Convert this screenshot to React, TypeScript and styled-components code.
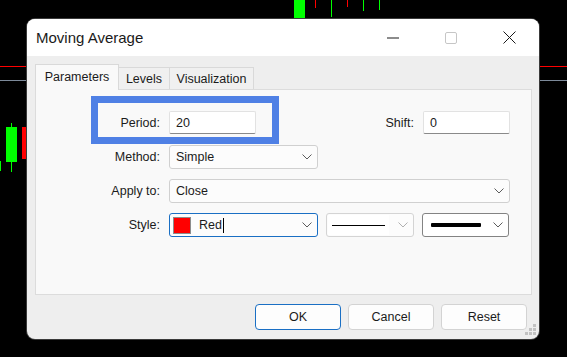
import React from 'react';
import styled, { createGlobalStyle } from 'styled-components';

const GlobalStyle = createGlobalStyle`
	html, body {
		margin: 0;
		padding: 0;
		background: #000;
	}
	body {
		font-family: 'Liberation Sans', Arial, sans-serif;
		color: #1b1b1b;
	}
`;

const Stage = styled.div`
	position: relative;
	width: 567px;
	height: 357px;
	overflow: hidden;
	background: #000;
	padding: 19px 0 0 27px;
	box-sizing: border-box;
`;

const Chart = styled.svg`
	position: absolute;
	left: 0;
	top: 0;
`;

const Window = styled.div`
	position: relative;
	width: 512px;
	height: 320px;
	border-radius: 8px;
	background: #eeeeee;
	overflow: hidden;
	display: flex;
	flex-direction: column;
	box-shadow: 0 0 0 1px #3a3a3a;
`;

const TitleBar = styled.div`
	height: 37px;
	flex-shrink: 0;
	display: flex;
	align-items: center;
	padding: 0 1px 0 9px;
	background: #ffffff;

	> .title {
		font-size: 15px;
		color: #1a1a1a;
	}
`;

const Controls = styled.div`
	margin-left: auto;
	display: flex;
	height: 100%;
`;

const ControlButton = styled.div`
	width: 58px;
	height: 100%;
	display: flex;
	align-items: center;
	justify-content: center;
`;

const Body = styled.div`
	flex: 1;
	display: flex;
	flex-direction: column;
	padding: 8px 7px 0 8px;
	font-size: 12.5px;
`;

const TabStrip = styled.div`
	display: flex;
	align-items: flex-end;
	height: 25px;
	position: relative;
	z-index: 1;
`;

const Tab = styled.div<{ $active?: boolean; $width: number }>`
	width: ${(p) => p.$width}px;
	box-sizing: border-box;
	display: flex;
	align-items: center;
	justify-content: center;
	border: 1px solid #d9d9d9;
	border-bottom: none;
	border-left-width: ${(p) => (p.$active ? 1 : 0)}px;
	height: ${(p) => (p.$active ? 26 : 22)}px;
	margin-bottom: ${(p) => (p.$active ? -1 : 0)}px;
	background: ${(p) => (p.$active ? '#f9f9f9' : '#f0f0f0')};
	padding-bottom: ${(p) => (p.$active ? 1 : 0)}px;
`;

const Panel = styled.div`
	height: 206px;
	box-sizing: border-box;
	border: 1px solid #dcdcdc;
	background: #f9f9f9;
	padding-top: 6px;
	display: flex;
	flex-direction: column;
`;

const TopRow = styled.div`
	display: flex;
	align-items: flex-start;
`;

const Highlight = styled.div`
	margin-left: 55px;
	border: 7px solid #4f80e5;
	padding: 8px 16px 3px 0;
	display: flex;
	align-items: center;
	gap: 9px;
`;

const ShiftGroup = styled.div`
	margin-left: auto;
	margin-right: 21px;
	margin-top: 15px;
	display: flex;
	align-items: center;
	gap: 9px;
`;

const Label = styled.div<{ $width?: number }>`
	width: ${(p) => (p.$width ? `${p.$width}px` : 'auto')};
	text-align: right;
	flex-shrink: 0;
`;

const TextBox = styled.div`
	width: 87px;
	height: 23px;
	box-sizing: border-box;
	background: #ffffff;
	border: 1px solid #e2e2e2;
	border-bottom-color: #8a8a8a;
	border-radius: 2px;
	padding-left: 6px;
	display: flex;
	align-items: center;
`;

const Row = styled.div<{ $gap: number }>`
	display: flex;
	align-items: center;
	gap: 9px;
	margin-top: ${(p) => p.$gap}px;
`;

const StyleRow = styled(Row)`
	> .rest {
		display: flex;
		gap: 8px;
	}
`;

const Select = styled.div<{ $width: number; $tone?: 'focus' | 'dim' | 'dark' }>`
	width: ${(p) => p.$width}px;
	height: 24px;
	box-sizing: border-box;
	display: flex;
	align-items: center;
	padding: 0 5px 0 6px;
	border-radius: 3px;
	background: ${(p) => (p.$tone === 'dark' ? '#ffffff' : '#fcfcfc')};
	border: 1px solid
		${(p) =>
			p.$tone === 'focus' ? '#1a6fc4' : p.$tone === 'dark' ? '#838383' : p.$tone === 'dim' ? '#d4d4d4' : '#d0d0d0'};

	> svg {
		margin-left: auto;
		flex-shrink: 0;
	}
`;

const ColorSwatch = styled.span`
	width: 18px;
	height: 17px;
	box-sizing: border-box;
	background: #ff0000;
	border: 1px solid #8c8c8c;
	margin-left: -3px;
	margin-right: 8px;
`;

const Caret = styled.span`
	display: inline-block;
	width: 1px;
	height: 15px;
	background: #000;
	margin-left: 1px;
`;

const LineBox = styled.div`
	width: 61px;
	height: 20px;
	margin-left: -5px;
	background: #ffffff;
	display: flex;
	align-items: center;
	justify-content: center;
`;

const LineMark = styled.div<{ $width: number; $thick: number; $offset?: number }>`
	width: ${(p) => p.$width}px;
	height: ${(p) => p.$thick}px;
	margin-left: ${(p) => p.$offset ?? 0}px;
	background: #000;
	border-radius: ${(p) => (p.$thick > 2 ? 1 : 0)}px;
`;

const Footer = styled.div`
	display: flex;
	justify-content: flex-end;
	gap: 7px;
	margin-top: 9px;
	padding-right: 5px;
`;

const Button = styled.div<{ $primary?: boolean }>`
	width: 86px;
	height: 26px;
	box-sizing: border-box;
	display: flex;
	align-items: center;
	justify-content: center;
	border-radius: 4px;
	background: #fdfdfd;
	border: 1px solid ${(p) => (p.$primary ? '#1a6fc4' : '#d3d3d3')};
`;

const Grip = styled.svg`
	position: absolute;
	right: 2px;
	bottom: 3px;
`;

const Chevron: React.FC<{ color?: string }> = ({ color = '#5c5c5c' }) => (
	<svg width="10" height="6" viewBox="0 0 10 6">
		<path d="M0.5 0.5 L5 5 L9.5 0.5" fill="none" stroke={color} strokeWidth="1" />
	</svg>
);

export default function App() {
	return (
		<Stage>
			<GlobalStyle />
			<Chart width="567" height="357" viewBox="0 0 567 357">
				<rect x="0" y="66" width="567" height="1" fill="#ff0000" />
				<rect x="0" y="80" width="567" height="1" fill="#7d8a9a" />
				<rect x="294" y="0" width="11" height="18" fill="#00ff00" />
				<rect x="315" y="0" width="1" height="8" fill="#ff0000" />
				<rect x="331" y="0" width="1" height="17" fill="#00ff00" />
				<rect x="347" y="0" width="1" height="7" fill="#ff0000" />
				<rect x="363" y="0" width="1" height="11" fill="#00ff00" />
				<rect x="379" y="0" width="1" height="10" fill="#00ff00" />
				<rect x="11" y="123" width="1" height="49" fill="#00ff00" />
				<rect x="6" y="127" width="11" height="35" fill="#00ff00" />
				<rect x="22" y="127" width="6" height="32" fill="#ff0000" />
				<rect x="0" y="161" width="1" height="10" fill="#00ff00" />
			</Chart>
			<Window>
				<TitleBar>
					<span className="title">Moving Average</span>
					<Controls>
						<ControlButton>
							<svg width="12" height="12" viewBox="0 0 12 12">
								<rect x="0" y="5.5" width="12" height="1" fill="#1a1a1a" />
							</svg>
						</ControlButton>
						<ControlButton>
							<svg width="12" height="12" viewBox="0 0 12 12">
								<rect x="0.5" y="0.5" width="11" height="11" rx="1.5" fill="none" stroke="#c6c6c6" />
							</svg>
						</ControlButton>
						<ControlButton>
							<svg width="13" height="13" viewBox="0 0 13 13">
								<path d="M0.5 0.5 L12.5 12.5 M12.5 0.5 L0.5 12.5" stroke="#1a1a1a" strokeWidth="1" />
							</svg>
						</ControlButton>
					</Controls>
				</TitleBar>
				<Body>
					<TabStrip>
						<Tab $active $width={84}>Parameters</Tab>
						<Tab $width={51}>Levels</Tab>
						<Tab $width={84}>Visualization</Tab>
					</TabStrip>
					<Panel>
						<TopRow>
							<Highlight>
								<Label $width={62}>Period:</Label>
								<TextBox>20</TextBox>
							</Highlight>
							<ShiftGroup>
								<Label>Shift:</Label>
								<TextBox>0</TextBox>
							</ShiftGroup>
						</TopRow>
						<Row $gap={1}>
							<Label $width={124}>Method:</Label>
							<Select $width={149}>
								Simple
								<Chevron />
							</Select>
						</Row>
						<Row $gap={10}>
							<Label $width={124}>Apply to:</Label>
							<Select $width={341}>
								Close
								<Chevron />
							</Select>
						</Row>
						<StyleRow $gap={10}>
							<Label $width={124}>Style:</Label>
							<div className="rest">
								<Select $width={149} $tone="focus">
									<ColorSwatch />
									Red
									<Caret />
									<Chevron />
								</Select>
								<Select $width={88} $tone="dim">
									<LineBox>
										<LineMark $width={53} $thick={1} />
									</LineBox>
									<Chevron color="#b0b0b0" />
								</Select>
								<Select $width={87} $tone="dark">
									<LineMark $width={50} $thick={4} $offset={2} />
									<Chevron />
								</Select>
							</div>
						</StyleRow>
					</Panel>
					<Footer>
						<Button $primary>OK</Button>
						<Button>Cancel</Button>
						<Button>Reset</Button>
					</Footer>
				</Body>
				<Grip width="12" height="12" viewBox="0 0 12 12">
					<rect x="8" y="0" width="3" height="3" fill="#c2c2c2" />
					<rect x="4" y="4" width="3" height="3" fill="#c2c2c2" />
					<rect x="8" y="4" width="3" height="3" fill="#c2c2c2" />
					<rect x="0" y="8" width="3" height="3" fill="#c2c2c2" />
					<rect x="4" y="8" width="3" height="3" fill="#c2c2c2" />
					<rect x="8" y="8" width="3" height="3" fill="#c2c2c2" />
				</Grip>
			</Window>
		</Stage>
	);
}
